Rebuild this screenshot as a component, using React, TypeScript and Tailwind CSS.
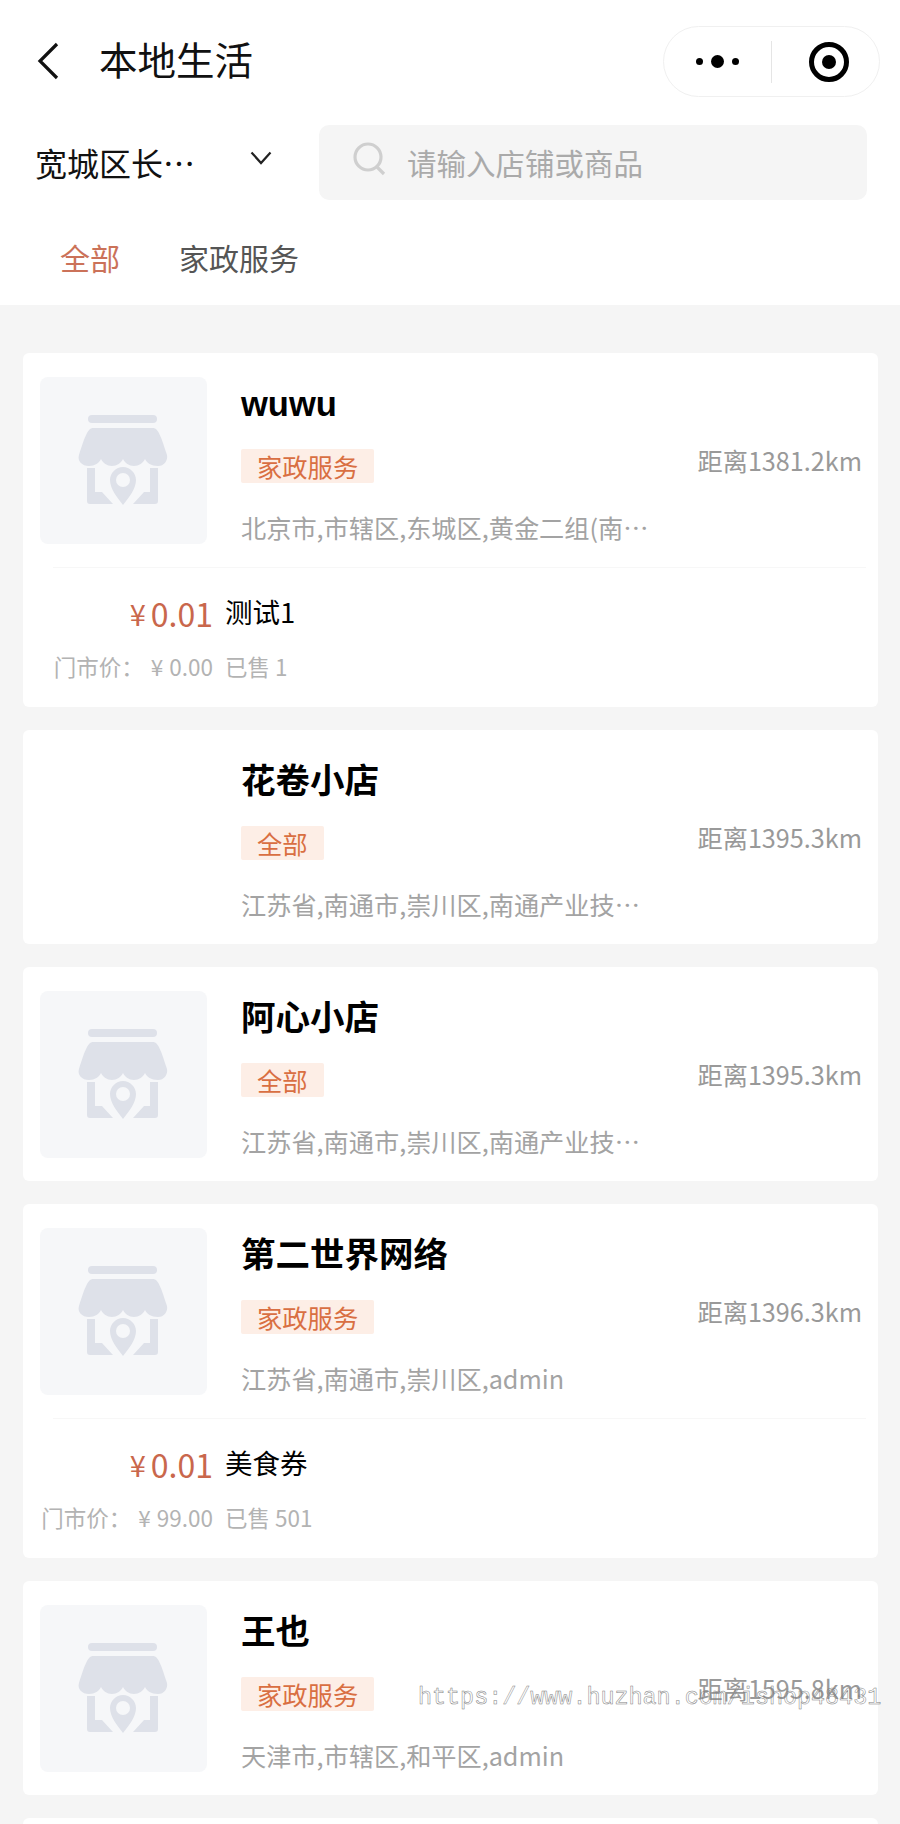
import React from "react";

const font = { fontFamily: '"Noto Sans CJK SC", "Noto Sans", sans-serif' };

function ShopIcon() {
  return (
    <svg viewBox="0 0 167 167" className="h-full w-full">
      <rect x="48" y="38" width="69" height="8" rx="4" fill="#dee1e9" />
      <path
        d="M53 51H113C118 51 121 59 127 78C128 84 124 89 118 89C111 89 107 86 105 82C103 86 99 89 94 89C89 89 85 86 83 82C81 86 77 89 72 89C67 89 63 86 61 82C59 86 55 89 49 89C42 89 37 84 39 78C45 59 48 51 53 51Z"
        fill="#dee1e9"
      />
      <path d="M47 91H55V115H62L73 127H50C48 127 47 126 47 124Z" fill="#dee1e9" />
      <path d="M118 91H110V115H104L93 127H115C117 127 118 126 118 124Z" fill="#dee1e9" />
      <path
        d="M83 128C77 120 70 112 70 103C70 96 76 90 83 90C90 90 96 96 96 103C96 112 89 120 83 128Z"
        fill="#dee1e9"
      />
      <circle cx="83" cy="103" r="7" fill="#f6f7f9" />
    </svg>
  );
}

type Deal = { name: string; market: string; sold: string };
type Shop = {
  name: string;
  tag: string;
  dist: string;
  addr: string;
  img: boolean;
  deal?: Deal;
};

const shops: Shop[] = [
  {
    name: "wuwu",
    tag: "家政服务",
    dist: "距离1381.2km",
    addr: "北京市,市辖区,东城区,黄金二组(南…",
    img: true,
    deal: { name: "测试1", market: "0.00", sold: "已售 1" },
  },
  {
    name: "花卷小店",
    tag: "全部",
    dist: "距离1395.3km",
    addr: "江苏省,南通市,崇川区,南通产业技…",
    img: false,
  },
  {
    name: "阿心小店",
    tag: "全部",
    dist: "距离1395.3km",
    addr: "江苏省,南通市,崇川区,南通产业技…",
    img: true,
  },
  {
    name: "第二世界网络",
    tag: "家政服务",
    dist: "距离1396.3km",
    addr: "江苏省,南通市,崇川区,admin",
    img: true,
    deal: { name: "美食券", market: "99.00", sold: "已售 501" },
  },
  {
    name: "王也",
    tag: "家政服务",
    dist: "距离1595.8km",
    addr: "天津市,市辖区,和平区,admin",
    img: true,
  },
];

function ShopCard({ shop }: { shop: Shop }) {
  return (
    <div className="rounded-[6px] bg-white">
      <div className="flex pl-[17px] pr-[16px] pt-[24px] pb-[23px]">
        <div className={shop.img ? "h-[167px] w-[167px] shrink-0 rounded-[8px] bg-[#f6f7f9]" : "h-[167px] w-[167px] shrink-0"}>
          {shop.img && <ShopIcon />}
        </div>
        <div className="ml-[34px] flex h-[167px] flex-1 flex-col items-start">
          <div className="h-[54px] text-[34.5px] font-bold leading-[54px] text-black [font-family:'Liberation_Sans','Noto_Sans_CJK_SC',sans-serif]">
            {shop.name}
          </div>
          <div className="flex w-full items-center justify-between">
            <div className="mt-[18px] flex h-[34px] items-center rounded-[2px] bg-[#fdeee6] px-[16px] text-[25.3px] leading-[34px] text-[#d96f42]">
              {shop.tag}
            </div>
            <div className="mt-[6px] text-[25.2px] leading-[34px] text-[#999999]">{shop.dist}</div>
          </div>
          <div className="mt-[27px] whitespace-nowrap text-[25.2px] leading-[34px] text-[#a3a3a3]">{shop.addr}</div>
        </div>
      </div>
      {shop.deal && (
        <div>
          <div className="ml-[30px] mr-[12px] h-px bg-[#f7f7f7]" />
          <div className="grid grid-cols-[190px_1fr] gap-x-[12px] pt-[23px] pb-[19px]">
            <div className="flex h-[44px] items-center justify-end text-[#c9674c]">
              <span className="mr-[5px] text-[29px] leading-[44px]">¥</span>
              <span className="text-[32px] leading-[44px]">0.01</span>
            </div>
            <div className="h-[44px] text-[27.5px] leading-[40px] text-black">{shop.deal.name}</div>
            <div className="mt-[9px] flex h-[44px] items-center justify-end whitespace-nowrap text-[22.5px] leading-[44px] text-[#b3b3b3]">
              <span>门市价：</span>
              <span className="ml-[7px] mr-[6px]">¥</span>
              <span>{shop.deal.market}</span>
            </div>
            <div className="mt-[9px] h-[44px] whitespace-nowrap text-[22.5px] leading-[44px] text-[#b3b3b3]">{shop.deal.sold}</div>
          </div>
        </div>
      )}
    </div>
  );
}

export default function App() {
  return (
    <div lang="zh-CN" style={font} className="relative h-[1824px] w-[900px] overflow-hidden bg-[#f5f5f5]">
      <div className="h-[305px] bg-white">
        <div className="flex h-[124px] items-start justify-between pl-[36px] pr-[20px] pt-[26px]">
          <div className="flex h-[71px] items-center">
            <svg width="24" height="38" viewBox="0 0 24 38" fill="none" stroke="#111" strokeWidth="3.2" className="mb-[2px]">
              <path d="M21 2L4 19L21 36" />
            </svg>
            <div className="ml-[39px] mb-[6px] h-[65px] text-[38.5px] leading-[65px] text-[#111]">本地生活</div>
          </div>
          <div className="flex h-[71px] w-[217px] items-center rounded-[36px] border border-[#f0f0f0] bg-white">
            <div className="flex w-[107px] items-center justify-end gap-[8px] pr-[32px]">
              <span className="h-[7px] w-[7px] rounded-full bg-black" />
              <span className="h-[13px] w-[13px] rounded-full bg-black" />
              <span className="h-[7px] w-[7px] rounded-full bg-black" />
            </div>
            <div className="h-[42px] w-px bg-[#e5e5e5]" />
            <div className="flex flex-1 items-center justify-center pl-[6px]">
              <span className="flex h-[40px] w-[40px] items-center justify-center rounded-full border-[5px] border-black">
                <span className="h-[14px] w-[14px] rounded-full bg-black" />
              </span>
            </div>
          </div>
        </div>
        <div className="flex h-[76px] items-center pl-[35px] pr-[33px]">
          <span className="w-[215px] text-[32px] leading-[76px] text-[#111]">宽城区长…</span>
          <svg width="22" height="14" viewBox="0 0 22 14" fill="none" stroke="#222" strokeWidth="2.2" className="mb-[8px]">
            <path d="M1.5 1.5L11 12L20.5 1.5" />
          </svg>
          <div className="ml-[47px] flex h-[75px] flex-1 items-center rounded-[10px] bg-[#f5f5f5] pl-[34px]">
            <svg width="34" height="34" viewBox="0 0 34 34" fill="none" stroke="#cfcfcf" strokeWidth="3.2" className="mb-[6px]">
              <circle cx="15" cy="15" r="13" />
              <path d="M24 25L31 32" />
            </svg>
            <span className="ml-[20px] text-[29.5px] leading-[75px] text-[#aaaaaa]">请输入店铺或商品</span>
          </div>
        </div>
        <div className="flex h-[105px] items-center pt-[8px] pl-[60px] text-[30px] leading-[56px]">
          <span className="text-[#cb7259]">全部</span>
          <span className="ml-[59px] text-[#555555]">家政服务</span>
        </div>
      </div>
      <div className="ml-[23px] mr-[22px] flex flex-col gap-[23px] pt-[48px]">
        {shops.map((s) => (
          <ShopCard key={s.name} shop={s} />
        ))}
        <div className="h-[20px] rounded-[6px] bg-white" />
      </div>
      <div className="absolute left-[418px] top-[1683px] whitespace-nowrap text-[23.4px] leading-[30px] text-transparent [font-family:'Liberation_Mono',monospace] [-webkit-text-stroke:0.5px_#808080]">
        https://www.huzhan.com/ishop48431
      </div>
    </div>
  );
}
